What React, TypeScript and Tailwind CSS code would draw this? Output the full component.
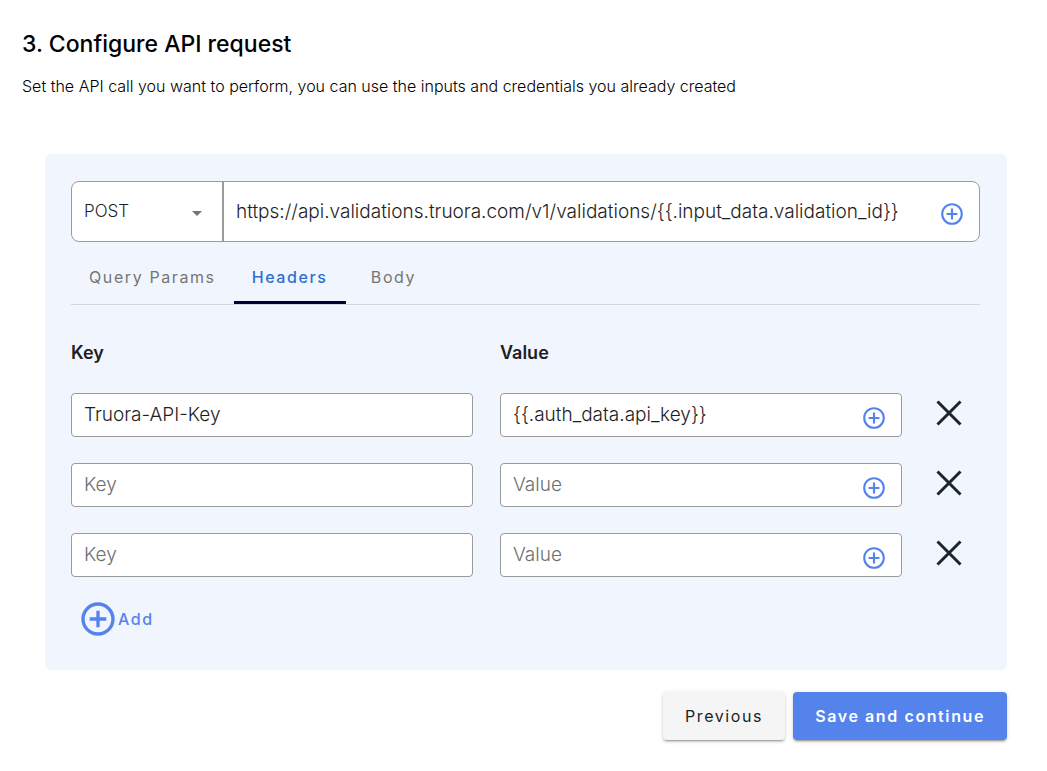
import { useState } from "react";

type Header = { id:number; key:string; value:string };
const METHODS = ['GET','POST','PUT','PATCH','DELETE'];
const TABS = ['Query Params','Headers','Body'];
const URL_DEFAULT = 'https://api.validations.truora.com/v1/validations/{{.input_data.validation_id}}';

const field = "flex h-11 items-center rounded border border-[#9b9b9b] bg-white pl-3 pr-[14px]";
const input = "w-full min-w-0 flex-1 bg-transparent pt-px text-[19px] font-light text-[#1e1e1e] outline-none placeholder:text-[#6f6f6f]";

function PlusCircle({ className }:{ className:string }){
  return (
    <svg viewBox="0 0 24 24" fill="currentColor" className={className} aria-hidden="true">
      <path d="M12,20C7.59,20 4,16.41 4,12C4,7.59 7.59,4 12,4C16.41,4 20,7.59 20,12C20,16.41 16.41,20 12,20M12,2A10,10 0 0,0 2,12A10,10 0 0,0 12,22A10,10 0 0,0 22,12A10,10 0 0,0 12,2M13,7H11V11H7V13H11V17H13V13H17V11H13V7Z" />
    </svg>
  );
}

function InsertButton({ label }:{ label:string }){
  return (
    <button type="button" aria-label={label} className="shrink-0 pt-[5px] text-[#5583ec]">
      <PlusCircle className="size-[26px]" />
    </button>
  );
}

export default function App(){
  const [method, setMethod] = useState('POST');
  const [url, setUrl] = useState(URL_DEFAULT);
  const [tab, setTab] = useState('Headers');
  const [rows, setRows] = useState<Header[]>([
    { id:1, key:'Truora-API-Key', value:'{{.auth_data.api_key}}' },
    { id:2, key:'', value:'' },
    { id:3, key:'', value:'' },
  ]);

  const update = (id:number, patch:Partial<Header>)=>
    setRows(prev=>prev.map(r=>r.id===id ? { ...r, ...patch } : r));
  const remove = (id:number)=> setRows(prev=>prev.filter(r=>r.id!==id));
  const add = ()=> setRows(prev=>[...prev, { id:Date.now(), key:'', value:'' }]);

  return (
    <main className="bg-white pb-7 pl-[22px] pr-10 pt-7 font-['Inter',sans-serif] text-black">
      <h1 className="text-[23px] font-medium leading-8">3. Configure API request</h1>
      <p className="mt-[14px] text-base font-light leading-6">
        Set the API call you want to perform, you can use the inputs and credentials you already created
      </p>

      <section className="ml-[23px] mt-14 rounded-md bg-[#f1f5fd] pb-[31px] pl-[26px] pr-[27px] pt-[27px]">
        {/* method + url */}
        <div className="flex h-[61px] rounded-lg border border-[#9b9b9b] bg-white">
          <div className="relative w-[152px] shrink-0 border-r-2 border-[#9b9b9b]">
            <select
              aria-label="Method"
              value={method}
              onChange={e=>setMethod(e.target.value)}
              className="h-full w-full appearance-none bg-transparent px-3 text-[17px] font-light text-[#1e1e1e] outline-none"
            >
              {METHODS.map(m=><option key={m}>{m}</option>)}
            </select>
            <svg viewBox="0 0 10 5" fill="#757575" className="pointer-events-none absolute right-5 top-[29px] h-[5px] w-[10px]" aria-hidden="true">
              <path d="M0 0h10L5 5z" />
            </svg>
          </div>
          <div className="flex min-w-0 flex-1 items-center gap-2 pl-3 pr-[14px]">
            <input aria-label="URL" value={url} onChange={e=>setUrl(e.target.value)} className={input} />
            <InsertButton label="Insert variable in URL" />
          </div>
        </div>

        {/* tabs */}
        <div role="tablist" className="mt-[11px] flex border-b border-[#d3d6dd]">
          {TABS.map(t=>(
            <button
              key={t}
              type="button"
              role="tab"
              aria-selected={t===tab}
              onClick={()=>setTab(t)}
              className={`h-[51px] min-w-24 border-b-3 px-[18px] text-base tracking-widest ${t===tab ? 'border-b-[#000033] font-medium text-[#2f6fd0]' : 'border-b-transparent text-[#757575]'}`}
            >
              {t}
            </button>
          ))}
        </div>

        {/* headers */}
        <div className="mt-9 grid grid-cols-[1fr_1fr_51px] gap-x-[27px] text-lg font-semibold leading-6 text-[#1e1e1e]">
          <h2>Key</h2>
          <h2>Value</h2>
        </div>
        <ul className="mt-7 space-y-[26px]">
          {rows.map(r=>(
            <li key={r.id} className="grid grid-cols-[1fr_1fr_51px] gap-x-[27px]">
              <div className={field}>
                <input aria-label="Key" placeholder="Key" value={r.key} onChange={e=>update(r.id,{ key:e.target.value })} className={input} />
              </div>
              <div className={field}>
                <input aria-label="Value" placeholder="Value" value={r.value} onChange={e=>update(r.id,{ value:e.target.value })} className={input} />
                <InsertButton label="Insert variable in value" />
              </div>
              <button type="button" aria-label="Remove header" onClick={()=>remove(r.id)} className="flex h-10 w-10 items-center justify-center text-[#1b262c]">
                <svg viewBox="0 0 26 26" stroke="currentColor" strokeWidth="3" className="size-[26px]" aria-hidden="true">
                  <path d="M1.5 1.5l23 23M24.5 1.5l-23 23" />
                </svg>
              </button>
            </li>
          ))}
        </ul>
        <button type="button" onClick={add} className="ml-[7px] mt-[22px] flex items-center text-base font-medium tracking-widest text-[#5583ec]">
          <PlusCircle className="size-10" />
          Add
        </button>
      </section>

      <div className="mt-[22px] flex justify-end gap-2">
        <button type="button" className="h-12 rounded bg-[#f5f5f5] px-[22px] text-base tracking-widest text-[#1e1e1e] shadow-[0_3px_1px_-2px_rgba(0,0,0,.2),0_2px_2px_0_rgba(0,0,0,.14),0_1px_5px_0_rgba(0,0,0,.12)]">Previous</button>
        <button type="button" className="h-12 rounded bg-[#5583ec] px-[22px] text-base font-semibold tracking-widest text-white shadow-[0_3px_1px_-2px_rgba(0,0,0,.2),0_2px_2px_0_rgba(0,0,0,.14),0_1px_5px_0_rgba(0,0,0,.12)]">Save and continue</button>
      </div>
    </main>
  );
}
